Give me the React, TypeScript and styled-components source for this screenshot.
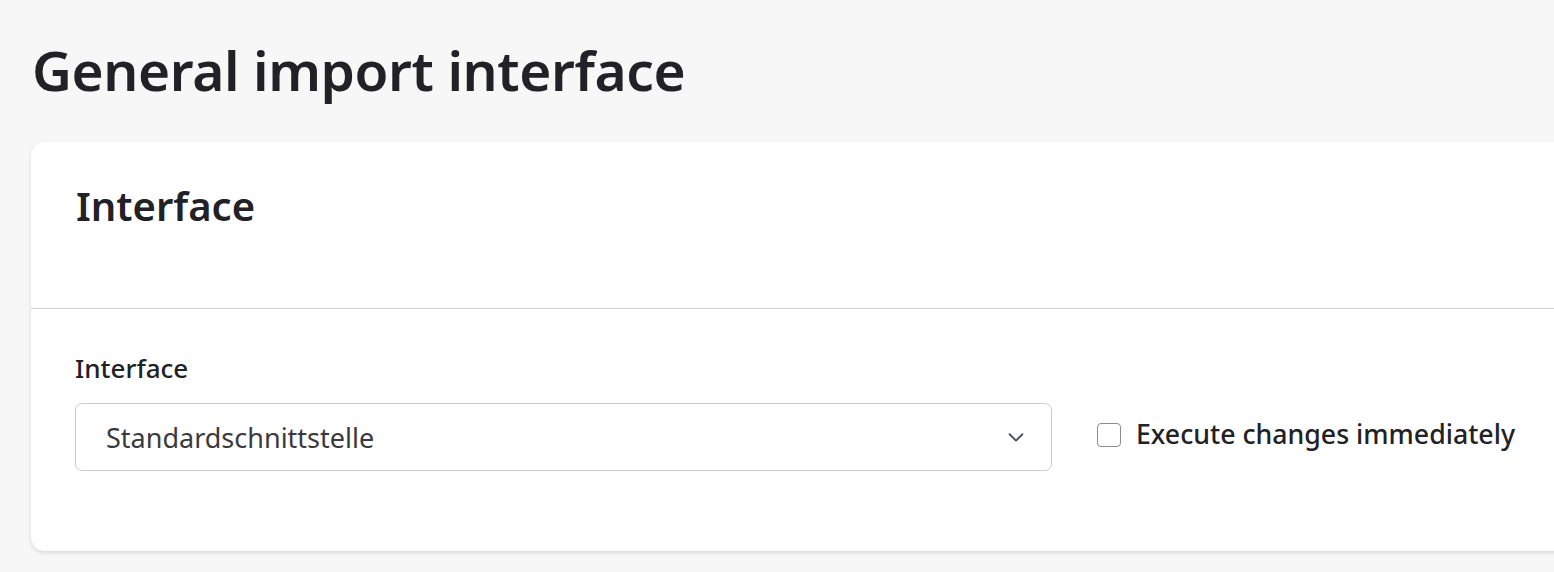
import React, { useState } from "react";
import styled, { createGlobalStyle } from "styled-components";

const GlobalStyle = createGlobalStyle`
  html, body {
    margin: 0;
    padding: 0;
    background: #f7f7f7;
    font-family: "Noto Sans", "Open Sans", sans-serif;
    color: #212126;
    overflow: hidden;
  }
  * { box-sizing: border-box; }
`;

const Page = styled.div`
  width: 1554px;
  height: 572px;
  padding: 34px 0 0 31px;
`;

const Title = styled.h1`
  margin: 0 0 36px 1px;
  font-size: 55px;
  line-height: 72px;
  font-weight: 600;
  letter-spacing: -0.4px;
`;

const Card = styled.section`
  width: 1560px;
  background: #fff;
  border-radius: 14px;
  box-shadow: 0 2px 4px rgba(0, 0, 0, 0.12);
`;

const CardHeader = styled.div`
  height: 167px;
  padding: 36px 45px;
  border-bottom: 1px solid #cfd3d8;
`;

const CardTitle = styled.h2`
  margin: 0;
  font-size: 40px;
  line-height: 56px;
  font-weight: 600;
`;

const CardBody = styled.div`
  padding: 42px 44px 80px;
  display: flex;
  align-items: flex-end;
  gap: 45px;
`;

const Field = styled.div`
  display: flex;
  flex-direction: column;
  gap: 18px;
`;

const Label = styled.label`
  font-size: 26px;
  line-height: 34px;
  font-weight: 500;
`;

const SelectBox = styled.div`
  width: 977px;
  height: 68px;
  border: 1px solid #c9ccd2;
  border-radius: 7px;
  display: flex;
  align-items: center;
  justify-content: space-between;
  padding: 0 24px 0 30px;
  font-size: 27px;
  color: #3a3a3e;
`;

const CheckRow = styled.label`
  height: 68px;
  display: flex;
  align-items: center;
  gap: 15px;
  font-size: 26.7px;
  font-weight: 500;
  padding-bottom: 8px;
`;

const Box = styled.span<{ $checked: boolean }>`
  width: 24px;
  height: 24px;
  margin-top: 4px;
  border: 1.5px solid #8a8d93;
  border-radius: 4px;
  background: ${(p) => (p.$checked ? "#212126" : "#fff")};
`;

export default function App() {
  const [checked, setChecked] = useState(false);

  return (
    <Page>
      <GlobalStyle />
      <Title>General import interface</Title>
      <Card>
        <CardHeader>
          <CardTitle>Interface</CardTitle>
        </CardHeader>
        <CardBody>
          <Field>
            <Label>Interface</Label>
            <SelectBox>
              <span>Standardschnittstelle</span>
              <svg width="22" height="22" viewBox="0 0 24 24" fill="none" stroke="#4a4d55" strokeWidth="2" strokeLinecap="round" strokeLinejoin="round">
                <path d="M5 9l7 7 7-7" />
              </svg>
            </SelectBox>
          </Field>
          <CheckRow onClick={() => setChecked(!checked)}>
            <Box $checked={checked} />
            Execute changes immediately
          </CheckRow>
        </CardBody>
      </Card>
    </Page>
  );
}
